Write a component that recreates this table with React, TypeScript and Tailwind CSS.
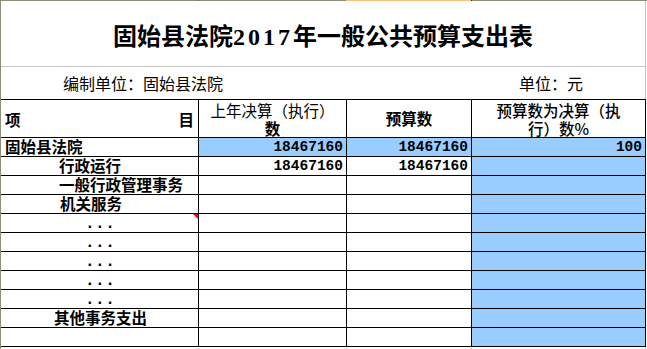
import React from 'react';

const cjk = "'Noto Sans CJK SC', 'Noto Sans', sans-serif";
const mono = "'Liberation Mono', 'Noto Sans CJK SC', monospace";

type Row = {
  name: string;
  indent: string;
  prev?: string;
  budget?: string;
  pct?: string;
  allBlue?: boolean;
  dots?: boolean;
  flag?: boolean;
};

const rows: Row[] = [
  { name: '固始县法院', indent: 'pl-[4px]', prev: '18467160', budget: '18467160', pct: '100', allBlue: true },
  { name: '行政运行', indent: 'pl-[58px]', prev: '18467160', budget: '18467160' },
  { name: '一般行政管理事务', indent: 'pl-[58px]' },
  { name: '机关服务', indent: 'pl-[59px]' },
  { name: '...', indent: 'pl-[84px]', dots: true, flag: true },
  { name: '...', indent: 'pl-[84px]', dots: true },
  { name: '...', indent: 'pl-[84px]', dots: true },
  { name: '...', indent: 'pl-[84px]', dots: true },
  { name: '...', indent: 'pl-[84px]', dots: true },
  { name: '其他事务支出', indent: 'pl-[53px]' },
  { name: '', indent: 'pl-[4px]' },
];

const cols = 'grid grid-cols-[198px_148px_125px_174px]';

export default function App() {
  return (
    <div className="w-[647px] h-[349px] bg-white text-black overflow-hidden" style={{ fontFamily: cjk }}>
      {/* sheet header edge */}
      <div className="flex h-px">
        <div className="w-[198px] bg-[#8e8e78]" />
        <div className="w-px bg-[#5c5c50]" />
        <div className="w-[147px] bg-[#8e8e78]" />
        <div className="w-[125px] bg-[#f9c27c]" />
        <div className="w-px bg-[#1c2a6e]" />
        <div className="flex-1 bg-[#8e8e78]" />
      </div>

      <div className="w-[646px] border-l border-[#8e8e78]">
        {/* title */}
        <div className="h-[66px] border-r border-b border-[#c4c4c4] flex items-center justify-center pt-[5px]">
          <h1 className="text-[24px] font-bold leading-none">
            固始县法院<span className="tracking-[3px]" style={{ fontFamily: "'Liberation Serif', serif" }}>2017</span>年一般公共预算支出表
          </h1>
        </div>

        {/* unit line */}
        <div className="h-[32px] border-r border-[#c4c4c4] flex items-center text-[16px] leading-none">
          <span className="w-[518px] pl-[62px]">编制单位：固始县法院</span>
          <span>单位：元</span>
        </div>

        {/* table */}
        <div className="border-t border-black">
          <div className={`${cols} h-[38px] border-b border-black text-[15.5px]`}>
            <div className="border-r border-black flex items-center justify-between px-[4px] pt-[2px] font-bold">
              <span>项</span>
              <span>目</span>
            </div>
            <div className="border-r border-black flex flex-col items-center justify-center leading-[18px] pt-[1px]">
              <span>上年决算（执行）</span>
              <span className="font-bold">数</span>
            </div>
            <div className="border-r border-black flex items-center justify-center font-bold">预算数</div>
            <div className="border-r border-black flex flex-col items-center justify-center leading-[18px] pt-[1px] font-medium">
              <span>预算数为决算（执</span>
              <span>行）数%</span>
            </div>
          </div>

          {rows.map((r, i) => (
            <div key={i} className={`${cols} h-[19px] border-b border-black`}>
              <div className={`relative border-r border-black flex ${r.dots ? 'items-end pb-[2px]' : 'items-center'} ${r.indent} text-[15.5px] font-bold leading-none`}>
                {r.dots ? (
                  <span className="text-[16px] leading-[12px] tracking-[0.5px]" style={{ fontFamily: mono }}>{r.name}</span>
                ) : (
                  <span>{r.name}</span>
                )}
                {r.flag && (
                  <span className="absolute top-0 right-0 w-0 h-0 border-t-[5px] border-l-[5px] border-t-[#ff0000] border-l-transparent" />
                )}
              </div>
              <div className={`border-r border-black flex items-center justify-end pr-[3px] text-[14.5px] font-bold leading-none ${r.allBlue ? 'bg-[#99ccff]' : ''}`} style={{ fontFamily: mono }}>
                {r.prev}
              </div>
              <div className={`border-r border-black flex items-center justify-end pr-[3px] text-[14.5px] font-bold leading-none ${r.allBlue ? 'bg-[#99ccff]' : ''}`} style={{ fontFamily: mono }}>
                {r.budget}
              </div>
              <div className="border-r border-black bg-[#99ccff] flex items-center justify-end pr-[3px] text-[14.5px] font-bold leading-none" style={{ fontFamily: mono }}>
                {r.pct}
              </div>
            </div>
          ))}

          {/* gridline stubs below */}
          <div className={`${cols} h-[3px]`}>
            <div className="border-r border-[#d0d0d0]" />
            <div className="border-r border-[#d0d0d0]" />
            <div className="border-r border-[#d0d0d0]" />
            <div className="border-r border-[#d0d0d0]" />
          </div>
        </div>
      </div>
    </div>
  );
}
